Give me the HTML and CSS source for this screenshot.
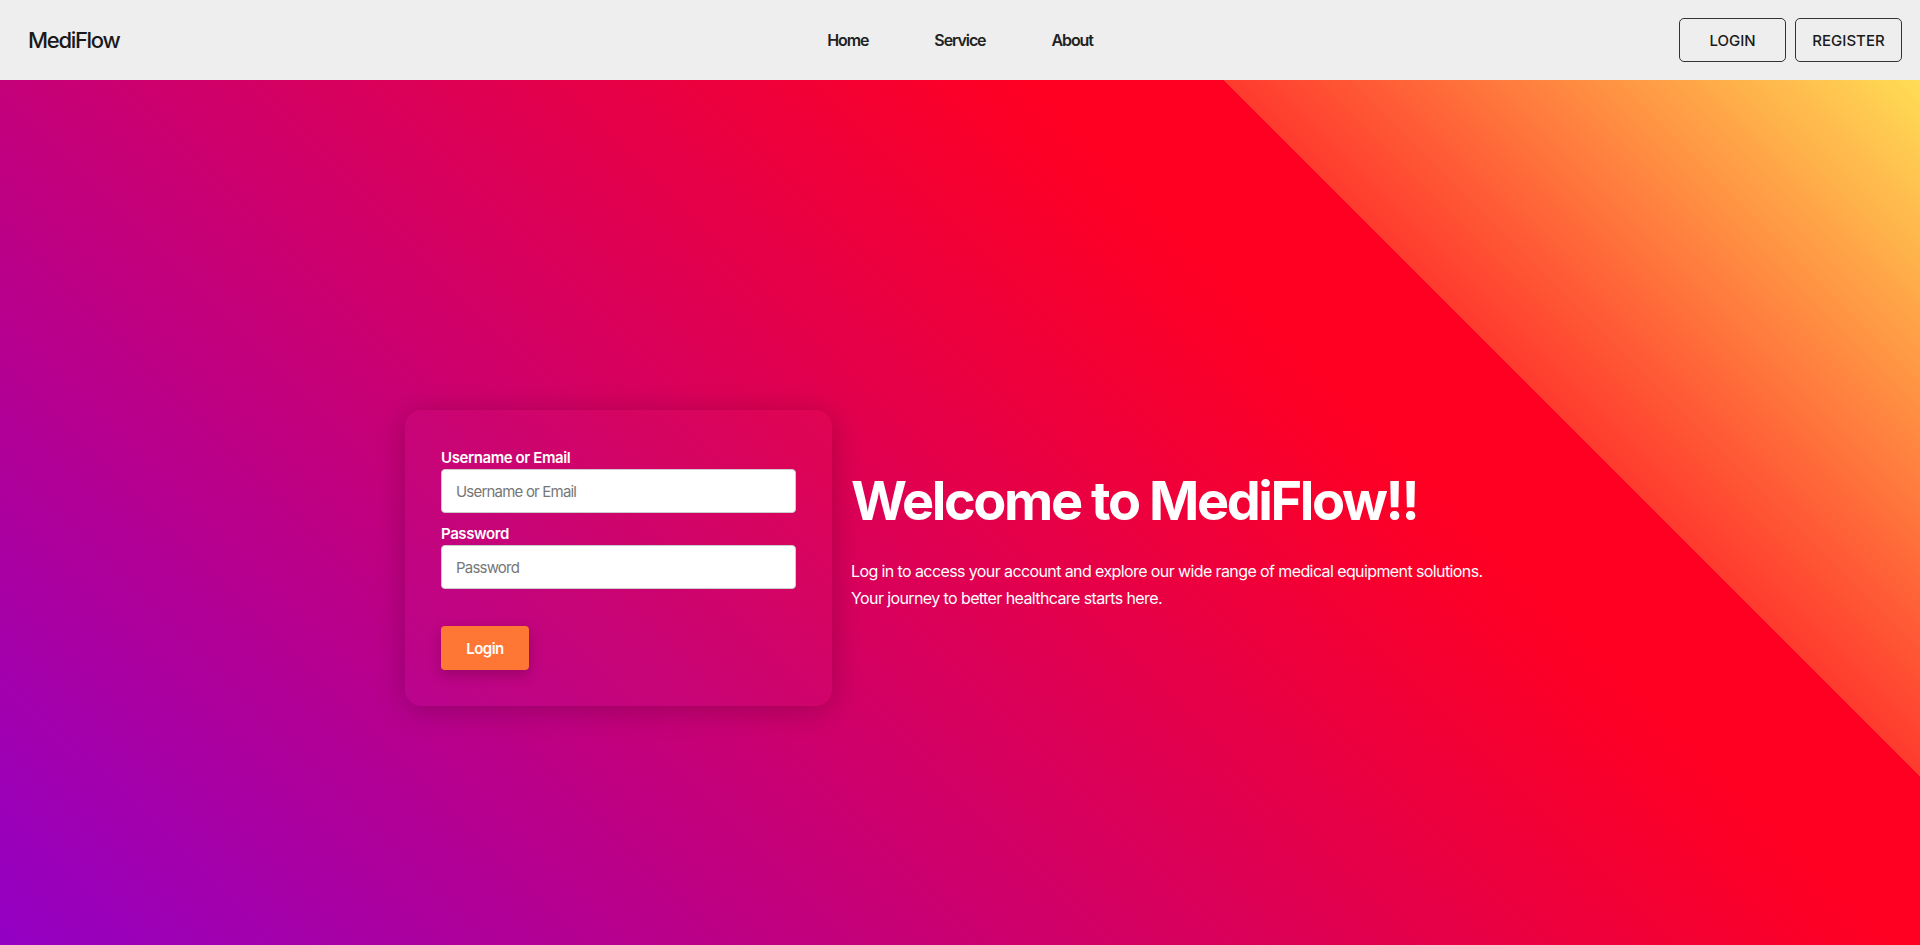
FILE: index.html
```html
<!DOCTYPE html>
<html lang="en">
<head>
<meta charset="UTF-8">
<title>MediFlow - Login</title>
<link rel="stylesheet" href="styles.css">
</head>
<body>
<header class="navbar">
  <div class="logo">MediFlow</div>
  <nav class="nav-links">
    <a href="#">Home</a>
    <a href="#">Service</a>
    <a href="#">About</a>
  </nav>
  <div class="auth">
    <button class="btn-outline">LOGIN</button>
    <button class="btn-outline">REGISTER</button>
  </div>
</header>
<main class="hero">
  <div class="hero-inner">
    <form class="login-card">
      <label class="field-label" for="user">Username or Email</label>
      <input class="field-input" id="user" type="text" placeholder="Username or Email">
      <label class="field-label" for="pass">Password</label>
      <input class="field-input last" id="pass" type="password" placeholder="Password">
      <button class="btn-login" type="button">Login</button>
    </form>
    <div class="welcome">
      <h1 class="welcome-title">Welcome to MediFlow!!</h1>
      <p class="welcome-text">Log in to access your account and explore our wide range of medical equipment solutions.<br>Your journey to better healthcare starts here.</p>
    </div>
  </div>
</main>
</body>
</html>
```
FILE: styles.css
```css
* { box-sizing: border-box; }
html, body { margin: 0; padding: 0; }
body {
  font-family: "Inter", "Liberation Sans", sans-serif;
  background: #eeeeee;
  overflow: hidden;
}
.navbar {
  height: 80px;
  background: #eeeeee;
  display: grid;
  grid-template-columns: 1fr auto 1fr;
  align-items: center;
}
.logo {
  padding-left: 28px;
  font-size: 22px;
  font-weight: 500;
  color: #1a1a1a;
  letter-spacing: -1.3px;
}
.nav-links {
  display: flex;
  gap: 66px;
}
.nav-links a {
  text-decoration: none;
  color: #222;
  font-size: 16px;
  font-weight: 600;
  letter-spacing: -1.1px;
}
.auth {
  justify-self: end;
  padding-right: 18px;
  display: flex;
  gap: 9px;
}
.btn-outline {
  width: 107px;
  height: 44px;
  border: 1px solid #333;
  border-radius: 5px;
  background: transparent;
  font-family: inherit;
  font-size: 15px;
  font-weight: 500;
  color: #1a1a1a;
}
.hero {
  height: calc(100vh - 80px);
  padding-top: 91px;
  display: flex;
  align-items: center;
  background: linear-gradient(45deg, #9300c4 0%, #ff0022 68%, #ff0022 75%, #ff3a2e 75%, #ffdd55 100%);
}
.hero-inner {
  width: 1110px;
  margin: 0 auto;
  display: flex;
  align-items: center;
  gap: 19px;
}
.login-card {
  width: 427px;
  flex: none;
  padding: 38px 36px 36px;
  border-radius: 16px;
  background: rgba(255, 255, 255, 0.015);
  box-shadow: 0 4px 30px rgba(0, 0, 0, 0.22);
  display: flex;
  flex-direction: column;
  align-items: flex-start;
}
.field-label {
  display: block;
  font-size: 15px;
  line-height: 20px;
  font-weight: 600;
  letter-spacing: -0.4px;
  color: #fff;
  margin-bottom: 1px;
}
.field-input {
  width: 100%;
  height: 44px;
  border: 1px solid #cccccc;
  border-radius: 4px;
  padding: 0 14px;
  font-family: inherit;
  font-size: 15px;
  letter-spacing: -0.8px;
  color: #222;
  background: #fff;
  margin: 0 0 11px;
  outline: none;
}
.field-input.last { margin-bottom: 37px; }
.field-input::placeholder { color: #777; }
.btn-login {
  width: 88px;
  height: 44px;
  border: none;
  border-radius: 4px;
  background: #ff7735;
  color: #fff;
  font-family: inherit;
  font-size: 15px;
  font-weight: 600;
  letter-spacing: -0.5px;
  box-shadow: 0 5px 14px rgba(0, 0, 0, 0.2);
}
.welcome {
  color: #fff;
  flex: 1;
  margin-bottom: 36px;
}
.welcome-title {
  margin: 0 0 24px;
  font-size: 54px;
  font-weight: 700;
  letter-spacing: -2.4px;
  line-height: 66px;
}
.welcome-text {
  margin: 0;
  font-size: 16px;
  letter-spacing: -0.6px;
  line-height: 27px;
}
```
